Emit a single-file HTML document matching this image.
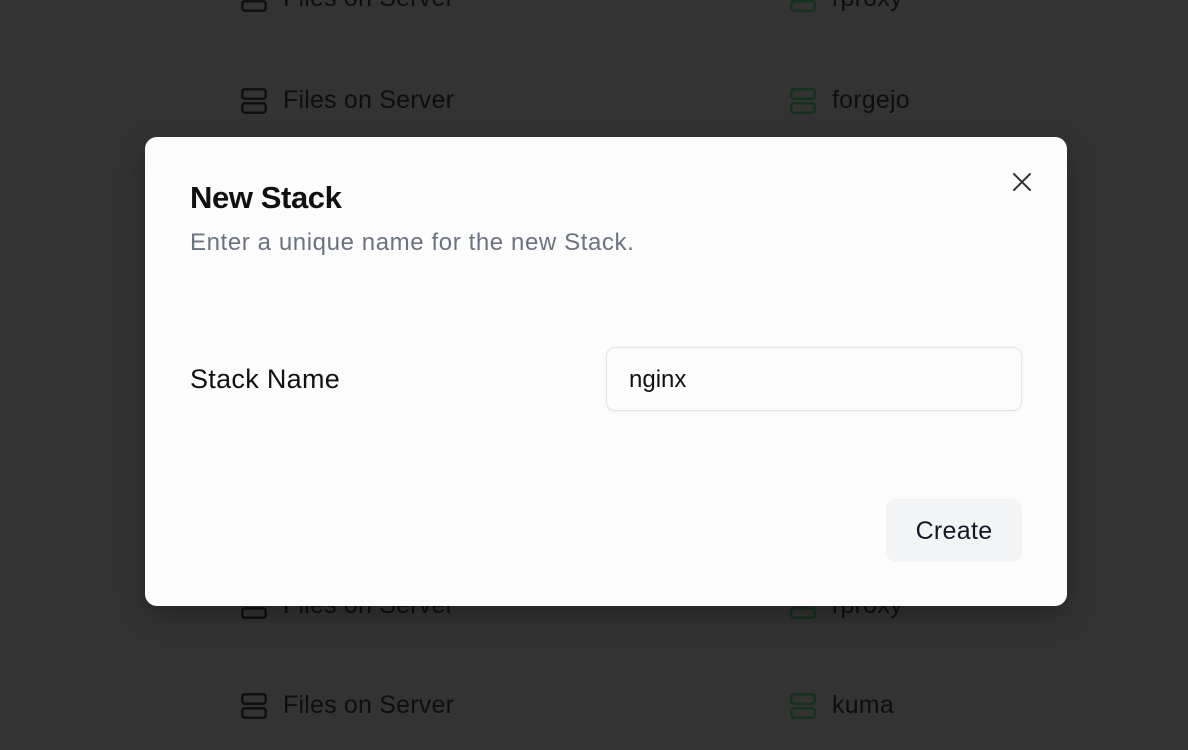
<!DOCTYPE html>
<html><head><style>
body{margin:0;width:1188px;height:750px;background:#333333;font-family:"Liberation Sans",sans-serif;position:relative;overflow:hidden}
.row{position:absolute;display:flex;align-items:center;font-size:25px;color:#0e0e0e;letter-spacing:0.2px}
.row svg{margin-right:15px}
.modal{position:absolute;left:145px;top:137px;width:922px;height:469px;background:#fcfcfc;border-radius:12px;box-shadow:0 10px 30px rgba(0,0,0,.3)}
h1{position:absolute;left:45px;top:43px;margin:0;font-size:31px;font-weight:bold;color:#111;letter-spacing:-0.4px}
.sub{position:absolute;left:45px;top:92px;font-size:24px;color:#6b7280;letter-spacing:0.6px}
.lbl{position:absolute;left:45px;top:227px;font-size:27px;color:#111;letter-spacing:0.3px}
.inp{position:absolute;left:461px;top:210px;width:416px;height:64px;border:1px solid #e3e4e8;border-radius:9px;background:#fcfcfc;box-sizing:border-box;padding-left:22px;line-height:63px;font-size:24px;color:#111;box-shadow:0 1px 3px rgba(0,0,0,.05)}
.btn{position:absolute;left:741px;top:362px;width:136px;height:63px;background:#f3f4f6;border-radius:10px;text-align:center;line-height:64px;font-size:25px;color:#111827;letter-spacing:0.3px}
.x{position:absolute;left:866px;top:34px}
</style></head><body>
<div class="row" style="left:240px;top:-16px"><svg width="28" height="28" viewBox="0 0 24 24" fill="none" stroke="#0e0e0e" stroke-width="2"><rect x="2" y="2" width="20" height="8" rx="2"/><rect x="2" y="14" width="20" height="8" rx="2"/><path d="M6 6h.01M6 18h.01"/></svg>Files on Server</div>
<div class="row" style="left:789px;top:-16px"><svg width="28" height="28" viewBox="0 0 24 24" fill="none" stroke="#14301e" stroke-width="2"><rect x="2" y="2" width="20" height="8" rx="2"/><rect x="2" y="14" width="20" height="8" rx="2"/><path d="M6 6h.01M6 18h.01"/></svg>rproxy</div>
<div class="row" style="left:240px;top:86px"><svg width="28" height="28" viewBox="0 0 24 24" fill="none" stroke="#0e0e0e" stroke-width="2"><rect x="2" y="2" width="20" height="8" rx="2"/><rect x="2" y="14" width="20" height="8" rx="2"/><path d="M6 6h.01M6 18h.01"/></svg>Files on Server</div>
<div class="row" style="left:789px;top:86px"><svg width="28" height="28" viewBox="0 0 24 24" fill="none" stroke="#14301e" stroke-width="2"><rect x="2" y="2" width="20" height="8" rx="2"/><rect x="2" y="14" width="20" height="8" rx="2"/><path d="M6 6h.01M6 18h.01"/></svg>forgejo</div>
<div class="row" style="left:240px;top:591px"><svg width="28" height="28" viewBox="0 0 24 24" fill="none" stroke="#0e0e0e" stroke-width="2"><rect x="2" y="2" width="20" height="8" rx="2"/><rect x="2" y="14" width="20" height="8" rx="2"/><path d="M6 6h.01M6 18h.01"/></svg>Files on Server</div>
<div class="row" style="left:789px;top:591px"><svg width="28" height="28" viewBox="0 0 24 24" fill="none" stroke="#14301e" stroke-width="2"><rect x="2" y="2" width="20" height="8" rx="2"/><rect x="2" y="14" width="20" height="8" rx="2"/><path d="M6 6h.01M6 18h.01"/></svg>rproxy</div>
<div class="row" style="left:240px;top:691px"><svg width="28" height="28" viewBox="0 0 24 24" fill="none" stroke="#0e0e0e" stroke-width="2"><rect x="2" y="2" width="20" height="8" rx="2"/><rect x="2" y="14" width="20" height="8" rx="2"/><path d="M6 6h.01M6 18h.01"/></svg>Files on Server</div>
<div class="row" style="left:789px;top:691px"><svg width="28" height="28" viewBox="0 0 24 24" fill="none" stroke="#14301e" stroke-width="2"><rect x="2" y="2" width="20" height="8" rx="2"/><rect x="2" y="14" width="20" height="8" rx="2"/><path d="M6 6h.01M6 18h.01"/></svg>kuma</div>
<div class="modal">
<h1>New Stack</h1>
<div class="sub">Enter a unique name for the new Stack.</div>
<svg class="x" width="22" height="22" viewBox="0 0 22 22" stroke="#333" stroke-width="2" stroke-linecap="round"><path d="M3 3L19 19M19 3L3 19"/></svg>
<div class="lbl">Stack Name</div>
<div class="inp">nginx</div>
<div class="btn">Create</div>
</div>
</body></html>
